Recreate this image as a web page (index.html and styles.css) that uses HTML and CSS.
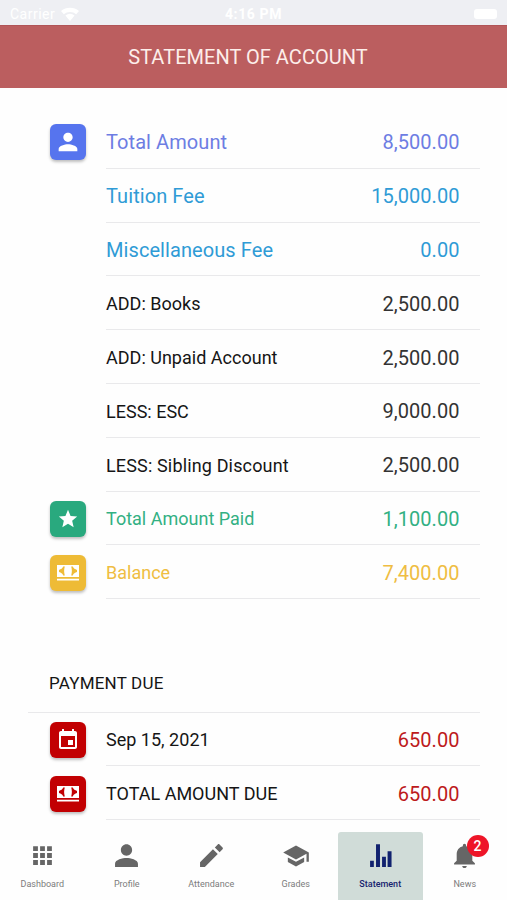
FILE: index.html
```html
<!DOCTYPE html>
<html lang="en">
<head>
    <meta charset="UTF-8">
    <meta name="viewport" content="width=device-width, initial-scale=1.0">
    <title>Statement of Account</title>
    <link rel="stylesheet" href="styles.css">
</head>
<body>
    <div class="status-bar">
        <div class="carrier">
            <span>Carrier</span>
            <svg class="wifi" viewBox="0 0 20 14"><path d="M10 14l3-3.6a4.6 4.6 0 0 0-6 0zM5.400 8.600l1.700 1.900a4.600 4.600 0 0 1 5.800 0l1.700-1.900a7.200 7.200 0 0 0-9.200 0zM1 4l2.800 3.200a9.500 9.500 0 0 1 12.400 0L19 4A14 14 0 0 0 1 4z"/></svg>
        </div>
        <span class="clock">4:16 PM</span>
        <span class="battery"></span>
    </div>
    <header class="title-bar">
        <h1>STATEMENT OF ACCOUNT</h1>
    </header>

    <main>
        <section class="fees">
            <div class="row indigo">
                <span class="tile person"><svg viewBox="0 0 24 24"><path d="M12 12c2.210 0 4-1.790 4-4s-1.790-4-4-4-4 1.790-4 4 1.790 4 4 4zm0 2c-2.670 0-8 1.340-8 4v2h16v-2c0-2.660-5.330-4-8-4z"/></svg></span>
                <div class="line"><span class="label big">Total Amount</span><span class="amount">8,500.00</span></div>
            </div>
            <div class="row blue">
                <div class="line"><span class="label big">Tuition Fee</span><span class="amount">15,000.00</span></div>
            </div>
            <div class="row blue">
                <div class="line"><span class="label big">Miscellaneous Fee</span><span class="amount">0.00</span></div>
            </div>
            <div class="row">
                <div class="line"><span class="label">ADD: Books</span><span class="amount">2,500.00</span></div>
            </div>
            <div class="row">
                <div class="line"><span class="label">ADD: Unpaid Account</span><span class="amount">2,500.00</span></div>
            </div>
            <div class="row">
                <div class="line"><span class="label">LESS: ESC</span><span class="amount">9,000.00</span></div>
            </div>
            <div class="row">
                <div class="line"><span class="label wide">LESS: Sibling Discount</span><span class="amount">2,500.00</span></div>
            </div>
            <div class="row green">
                <span class="tile"><svg viewBox="0 0 24 24"><path d="M12 17.270L18.180 21l-1.640-7.030L22 9.240l-7.190-.61L12 2 9.190 8.630 2 9.240l5.460 4.730L5.820 21z"/></svg></span>
                <div class="line"><span class="label">Total Amount Paid</span><span class="amount">1,100.00</span></div>
            </div>
            <div class="row yellow">
                <span class="tile cash"><svg viewBox="0 0 24 18"><path fill-rule="evenodd" d="M1 1h22v12H1zM8.800 2.600H7.200C6.500 4.400 5 5.500 3 5.900v2.200c2 .4 3.500 1.500 4.200 3.300h1.600C7.900 8.500 7.900 5.500 8.800 2.600zM15.200 2.600c.9 2.900.9 5.900 0 8.800h1.600C17.500 9.600 19 8.500 21 8.100V5.900c-2-.4-3.500-1.500-4.200-3.300zM1 14.700h22v1.800H1z"/></svg></span>
                <div class="line"><span class="label">Balance</span><span class="amount">7,400.00</span></div>
            </div>
        </section>

        <section class="due">
            <h2>PAYMENT DUE</h2>
            <div class="row red">
                <span class="tile"><svg viewBox="0 0 24 24"><path d="M17 12h-5v5h5v-5zM16 1v2H8V1H6v2H5c-1.110 0-1.990.9-1.990 2L3 19c0 1.100.89 2 2 2h14c1.100 0 2-.9 2-2V5c0-1.100-.9-2-2-2h-1V1h-2zm3 18H5V8h14v11z"/></svg></span>
                <div class="line"><span class="label">Sep 15, 2021</span><span class="amount">650.00</span></div>
            </div>
            <div class="row red">
                <span class="tile cash"><svg viewBox="0 0 24 18"><path fill-rule="evenodd" d="M1 1h22v12H1zM8.800 2.600H7.200C6.500 4.400 5 5.500 3 5.900v2.200c2 .4 3.500 1.500 4.200 3.300h1.600C7.900 8.500 7.900 5.500 8.800 2.600zM15.200 2.600c.9 2.900.9 5.900 0 8.800h1.600C17.500 9.600 19 8.500 21 8.100V5.900c-2-.4-3.500-1.500-4.200-3.300zM1 14.700h22v1.800H1z"/></svg></span>
                <div class="line"><span class="label">TOTAL AMOUNT DUE</span><span class="amount">650.00</span></div>
            </div>
        </section>
    </main>

    <nav class="tabs">
        <a class="tab">
            <svg viewBox="0 0 24 24"><path d="M3 3h4.600v4.600H3zM9.700 3h4.600v4.600H9.700zM16.400 3H21v4.600h-4.600zM3 9.700h4.600v4.600H3zM9.700 9.700h4.600v4.600H9.700zM16.400 9.700H21v4.600h-4.600zM3 16.400h4.600V21H3zM9.700 16.400h4.600V21H9.700zM16.400 16.400H21V21h-4.600z"/></svg>
            <span>Dashboard</span>
        </a>
        <a class="tab">
            <svg viewBox="0 0 24 24"><path d="M12 12.200c3 0 5.400-2.500 5.400-5.500S15 1.200 12 1.200 6.600 3.700 6.600 6.700s2.400 5.500 5.400 5.500zm0 2.200c-3.700 0-11 1.700-11 5.400V23h22v-3.200c0-3.700-7.300-5.400-11-5.400z"/></svg>
            <span>Profile</span>
        </a>
        <a class="tab">
            <svg viewBox="0 0 24 24"><path d="M1 18.400V23h4.600L18 10.600 13.400 6zM22.600 6c.5-.5.5-1.200 0-1.700l-2.900-2.900c-.5-.5-1.200-.5-1.700 0L15.200 4.200l4.600 4.600z"/></svg>
            <span>Attendance</span>
        </a>
        <a class="tab">
            <svg class="cap" viewBox="0 0 24 24"><path d="M5 13.180v4L12 21l7-3.820v-4L12 17l-7-3.820zM12 3L1 9l11 6 9-4.910V17h2V9L12 3z"/></svg>
            <span>Grades</span>
        </a>
        <a class="tab active">
            <svg viewBox="0 0 24 24"><path d="M2 17h3.600v6H2zM7.700 1.300h3.800V23H7.700zM13.500 13.300h3.700V23h-3.700zM18.800 7.800h3.800V23h-3.800z"/></svg>
            <span>Statement</span>
        </a>
        <a class="tab">
            <svg viewBox="0 0 24 24"><path d="M12 24c1.200 0 2.200-.9 2.200-2H9.800c0 1.100 1 2 2.200 2zM19.500 17v-6.200c0-3.900-2.200-6.800-5.900-7.700V2.300a1.600 1.600 0 0 0-3.200 0v.8C6.700 4 4.500 6.900 4.500 10.800V17L2 19.500v1.200h20v-1.200z"/></svg>
            <span>News</span>
            <b class="badge">2</b>
        </a>
    </nav>
</body>
</html>
```
FILE: styles.css
```css
* {
    box-sizing: border-box;
}
body {
    margin: 0;
    height: 900px;
    display: flex;
    flex-direction: column;
    overflow: hidden;
    background-color: #fefefe;
    font-family: Roboto, Arial, sans-serif;
    color: #151515;
}

.status-bar {
    display: grid;
    grid-template-columns: 1fr auto 1fr;
    align-items: center;
    height: 25px;
    flex: none;
    padding: 2px 10px 0;
    background-color: #eeeff3;
    color: #fff;
    font-size: 14px;
}
.carrier {
    display: flex;
    align-items: center;
    gap: 5px;
    letter-spacing: 0.5px;
}
.wifi {
    width: 20px;
    height: 14px;
    fill: #fff;
}
.clock {
    font-weight: bold;
    letter-spacing: 0.6px;
}
.battery {
    justify-self: end;
    width: 23px;
    height: 10px;
    border-radius: 3px;
    background-color: #fff;
}

.title-bar {
    display: flex;
    align-items: center;
    justify-content: center;
    height: 63px;
    flex: none;
    background-color: #bb5e5f;
    border-top: 1px solid #b05457;
}
h1 {
    margin: 0;
    padding: 0 11px 0 0;
    color: #fdeeea;
    font-size: 20px;
    font-weight: normal;
    letter-spacing: 0.03px;
}

main {
    flex: none;
    height: 744px;
    padding: 27px 27px 0 28px;
}
.row {
    display: flex;
    align-items: center;
    height: 53.8px;
    padding-left: 78px;
}
.row:has(.tile) {
    padding-left: 21.500px;
}
.tile {
    display: flex;
    align-items: center;
    justify-content: center;
    flex: none;
    width: 36px;
    height: 36px;
    margin: 0.5px 20.500px 0 0;
    border-radius: 6px;
    box-shadow: 0 2px 3px rgba(0, 0, 0, 0.25);
}
.tile svg {
    width: 24px;
    height: 24px;
    fill: #fff;
}
.tile.person svg {
    width: 28px;
    height: 28px;
}
.green .tile svg {
    width: 22px;
    height: 22px;
}
.tile.cash svg {
    height: 18px;
}
.line {
    flex: 1;
    display: flex;
    align-items: center;
    justify-content: space-between;
    height: 100%;
    padding: 2px 20.500px 0 0;
    border-bottom: 1px solid #e9e9eb;
}
.label {
    font-size: 18px;
    letter-spacing: 0.01px;
}
.label.wide {
    letter-spacing: 0.15px;
}
.label.big {
    font-size: 20px;
    letter-spacing: 0.08px;
}
.amount {
    font-size: 20px;
    letter-spacing: 0.05px;
    color: #333;
}

.indigo .label, .indigo .amount { color: #6d7de3; }
.blue .label, .blue .amount { color: #2f9bd6; }
.green .label, .green .amount { color: #32b083; }
.yellow .label, .yellow .amount { color: #efbd42; }
.red .amount { color: #bd1a1c; }
.indigo .tile { background-color: #5674ee; }
.green .tile { background-color: #29a97e; }
.yellow .tile { background-color: #eebb36; }
.red .tile { background-color: #c20002; }

h2 {
    display: flex;
    align-items: center;
    height: 59px;
    margin: 54.400px 0 0;
    padding: 1px 0 0 21px;
    border-bottom: 1px solid #e9e9eb;
    font-size: 17px;
    font-weight: normal;
    letter-spacing: 0.2px;
}

.tabs {
    display: grid;
    grid-template-columns: repeat(6, 1fr);
    flex: none;
    height: 68px;
}
.tab {
    position: relative;
    display: flex;
    flex-direction: column;
    align-items: center;
    padding-top: 11px;
    color: #7c7c7c;
    font-size: 9px;
}
.tab svg {
    width: 25px;
    height: 25px;
    fill: #666;
}
.tab svg.cap {
    width: 28px;
    height: 28px;
    margin: -1px 0 -2px;
}
.tab span {
    margin-top: 10px;
    line-height: 12px;
}
.tab.active {
    background-color: #d0dcd8;
    border-radius: 3px 3px 0 0;
    color: #17246f;
    font-weight: 500;
}
.tab.active svg {
    fill: #11226f;
}
.badge {
    position: absolute;
    top: 3px;
    left: 44px;
    width: 22px;
    height: 22px;
    border-radius: 50%;
    background-color: #ee1528;
    color: #fff;
    font-size: 14px;
    font-weight: 500;
    line-height: 22px;
    text-align: center;
}
```
